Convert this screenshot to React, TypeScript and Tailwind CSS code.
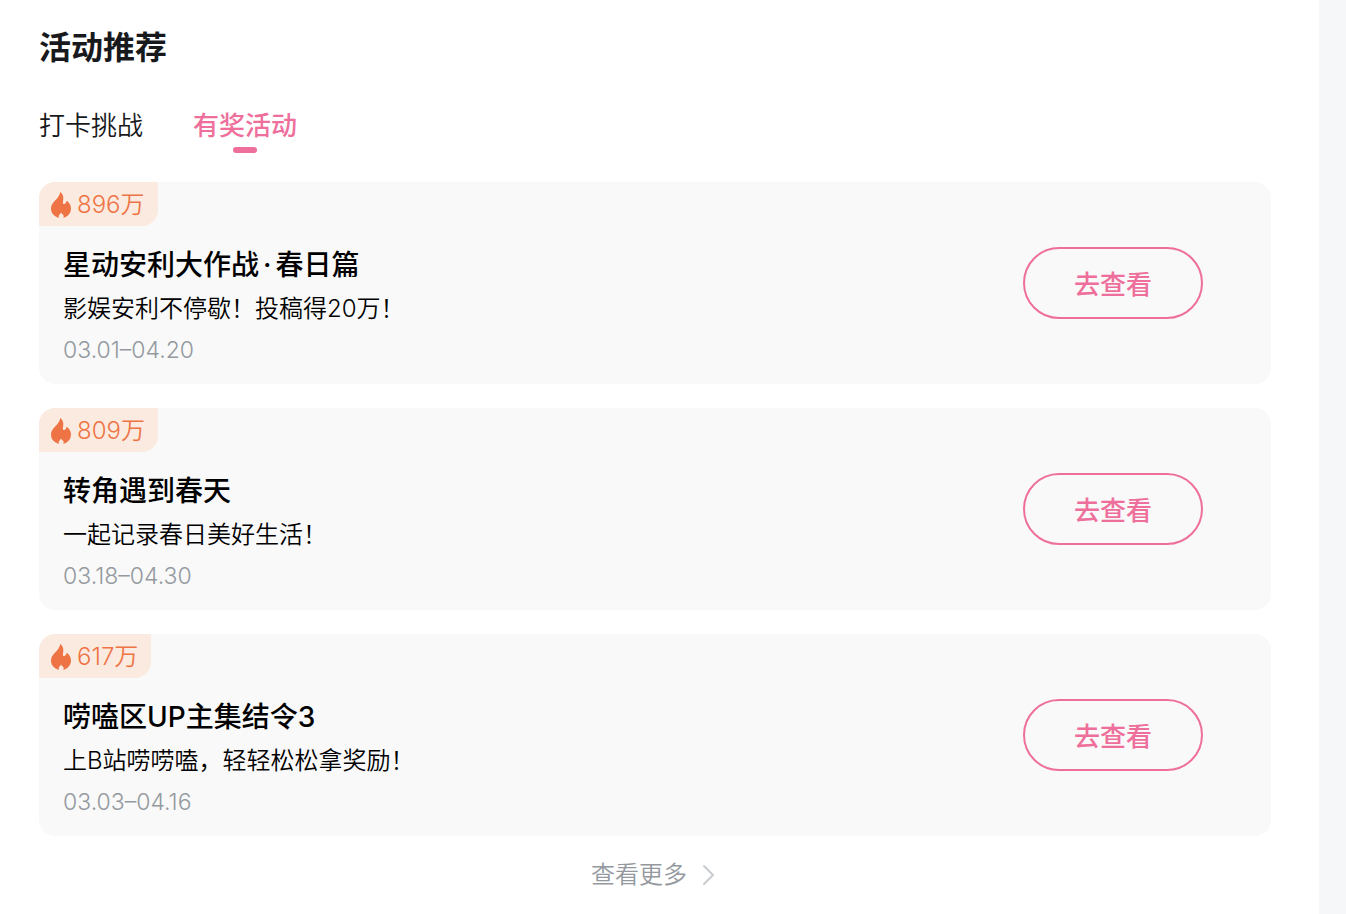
import { Fragment } from "react";

type Activity = { heat: string; title: string; desc: string; date: string };

const activities: Activity[] = [
  { heat: "896万", title: "星动安利大作战·春日篇", desc: "影娱安利不停歇！投稿得20万！", date: "03.01–04.20" },
  { heat: "809万", title: "转角遇到春天", desc: "一起记录春日美好生活！", date: "03.18–04.30" },
  { heat: "617万", title: "唠嗑区UP主集结令3", desc: "上B站唠唠嗑，轻轻松松拿奖励！", date: "03.03–04.16" },
];

function Flame() {
  return (
    <svg className="h-[26px] w-5 shrink-0" viewBox="0 0 20 26" fill="#ee7445" aria-hidden="true">
      <path d="M9.2 0C11.4 1.4 12.6 4 12.3 7C12 9.4 11.6 11.2 12.4 11.9C13.8 12.4 15.2 11.2 15.7 8.8C18.5 10.8 20 13.4 20 16.6C20 21 17.2 24.6 12.4 25.9C12.9 24.2 12.7 23.2 12 22.4C11.6 22.8 11.2 22.6 11 22.1C10.8 21.6 10.5 21 10 20.6C9.6 21.2 9.3 21.8 8.6 22.6C7.8 23.4 7.4 24.4 7.9 25.9C3.2 24.8 0 21.2 0 16.6C0 12.8 2 10.8 4.6 8C7 5.4 8.8 3.4 9.2 0Z" />
    </svg>
  );
}

function Title({ text }: { text: string }) {
  return (
    <h3 className="text-[28px] leading-[44px] font-medium text-black">
      {text.split("·").map((part, i) => (
        <Fragment key={part}>
          {i > 0 && <span className="px-1">·</span>}
          {part}
        </Fragment>
      ))}
    </h3>
  );
}

function ActivityCard({ heat, title, desc, date }: Activity) {
  return (
    <li className="flex items-center justify-between overflow-hidden rounded-2xl bg-[#f9f9f9] pr-[68px]">
      <div className="flex flex-col items-start pb-[14px]">
        <div className="flex h-11 items-center gap-[6px] rounded-br-2xl bg-[#fbeadf] pt-[2px] pr-[13px] pl-3 text-2xl leading-[44px] font-[350] text-[#ee7445]">
          <Flame />
          <span>{heat}</span>
        </div>
        <div className="mt-[17px] pl-6">
          <Title text={title} />
          <p className="text-2xl leading-[43px] font-[350] text-black">{desc}</p>
          <p className="text-[23px] leading-[40px] font-[350] text-[#9499a0]">{date}</p>
        </div>
      </div>
      <button
        type="button"
        className="h-[72px] w-[180px] shrink-0 rounded-full border-2 border-[#ee6f9b] pt-[2px] text-[26px] font-medium text-[#ee6f9b]"
      >
        去查看
      </button>
    </li>
  );
}

export default function App() {
  return (
    <div className="min-h-screen bg-[#f6f7f9] pr-[27px] font-['Inter','Noto_Sans_CJK_SC',sans-serif]">
      <section className="min-h-screen bg-white pt-6 pr-12 pl-[39px]">
        <h2 className="text-[32px] leading-[48px] font-bold text-[#18191c]">活动推荐</h2>
        <nav className="mt-[33px] flex items-start gap-[50px] text-[26px] leading-[42px]">
          <button type="button" className="font-[350] text-[#18191c]">
            打卡挑战
          </button>
          <button type="button" className="flex flex-col items-center font-medium text-[#ee6f9b]">
            有奖活动
            <span className="h-[6px] w-6 rounded-full bg-[#ee6f9b]" />
          </button>
        </nav>
        <ul className="mt-[29px] flex flex-col gap-6">
          {activities.map((a) => (
            <ActivityCard key={a.title} {...a} />
          ))}
        </ul>
        <a
          href="#more"
          className="mt-4 flex items-center justify-center gap-4 pr-1 text-2xl leading-[46px] font-[350] text-[#9499a0]"
        >
          查看更多
          <svg className="h-5 w-3" viewBox="0 0 12 20" fill="none" stroke="#c9ccd0" strokeWidth="2" aria-hidden="true">
            <path d="M1 1L10 10L1 19" strokeLinecap="round" strokeLinejoin="round" />
          </svg>
        </a>
      </section>
    </div>
  );
}
